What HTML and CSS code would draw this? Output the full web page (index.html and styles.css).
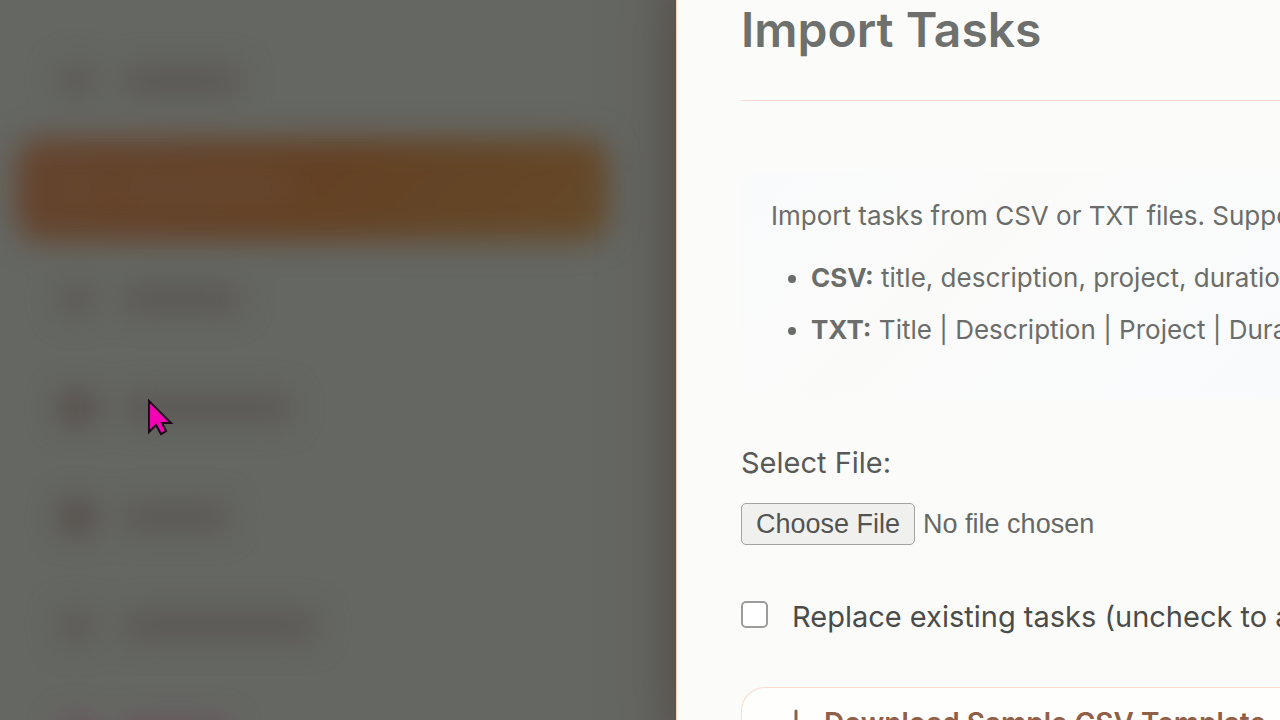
FILE: index.html
```html
<!DOCTYPE html>
<html lang="en">
<head>
  <meta charset="UTF-8" />
  <meta name="viewport" content="width=device-width, initial-scale=1.0" />
  <title>Import Tasks</title>
  <link rel="stylesheet" href="styles.css">
</head>
<body>
  <div class="app">
    <!-- Sidebar stays out of focus while the modal is open -->
    <aside class="sidebar" aria-hidden="true">
      <div class="nav">
        <div class="nav-item"><span class="nav-icon light"></span><span class="nav-text"></span></div>
        <div class="nav-item active"><span class="nav-icon"></span><span class="nav-text long"></span></div>
        <div class="nav-item"><span class="nav-icon light"></span><span class="nav-text"></span></div>
        <div class="nav-item"><span class="nav-icon"></span><span class="nav-text long"></span></div>
        <div class="nav-item"><span class="nav-icon"></span><span class="nav-text short"></span></div>
        <div class="nav-item"><span class="nav-icon light"></span><span class="nav-text longer"></span></div>
        <div class="nav-item danger"><span class="nav-icon"></span><span class="nav-text short"></span></div>
      </div>
    </aside>

    <main class="modal" role="dialog" aria-labelledby="modal-title">
      <div class="modal-header">
        <h1 id="modal-title">Import Tasks</h1>
      </div>

      <div class="import-info">
        <p>Import tasks from CSV or TXT files. Supported formats:</p>
        <ul>
          <li><strong>CSV:</strong> title, description, project, duration</li>
          <li><strong>TXT:</strong> Title | Description | Project | Duration</li>
        </ul>
      </div>

      <form class="import-form">
        <label class="file-label" for="import-file">Select File:</label>
        <input type="file" id="import-file" />

        <div class="check-row">
          <input type="checkbox" id="replace-tasks" />
          <label for="replace-tasks">Replace existing tasks (uncheck to append)</label>
        </div>

        <button type="button" class="download-btn">
          <svg width="28" height="28" viewBox="0 0 28 28" fill="none" stroke="currentColor" stroke-width="3" stroke-linecap="round" stroke-linejoin="round">
            <path d="M14 2v22M5 15l9 9 9-9" />
          </svg>
          Download Sample CSV Template
        </button>
      </form>
    </main>
  </div>

  <svg class="cursor" width="28" height="38" viewBox="0 0 28 38" aria-hidden="true">
    <path d="M2 2v31l7-7 5 9 5-3-4-8h9z" fill="#f400b5" stroke="#1d0718" stroke-width="2" />
  </svg>
</body>
</html>
```

FILE: styles.css
```css
* {
  box-sizing: border-box;
}
body {
  margin: 0;
  font-family: Inter, "Liberation Sans", sans-serif;
  background: #656763;
  overflow: hidden;
}
.app {
  display: flex;
  height: 100vh;
  overflow: hidden;
}

/* Sidebar */
.sidebar {
  flex: 0 0 676px;
}
.nav {
  display: flex;
  flex-direction: column;
  gap: 6px;
  padding: 29px 68px 0 16px;
  filter: blur(15px);
}
.nav-item {
  display: flex;
  align-items: center;
  flex-shrink: 0;
  gap: 30px;
  height: 103px;
  padding-left: 44px;
  border-radius: 24px;
}
.nav-item.active {
  background: linear-gradient(135deg, #65442f, #644124 50%, #654a29);
}
.nav-icon {
  width: 34px;
  height: 34px;
  border-radius: 8px;
  background: #554c48;
}
.nav-icon.light {
  background: #5c5954;
}
.nav-text {
  width: 116px;
  height: 28px;
  background: #5b5752;
}
.nav-text.short {
  width: 104px;
}
.nav-text.long {
  width: 166px;
}
.nav-text.longer {
  width: 192px;
}
.active .nav-icon,
.active .nav-text {
  background: #66472f;
}
.danger .nav-icon,
.danger .nav-text {
  background: #67525a;
}

/* Modal */
.modal {
  position: relative;
  flex: 1;
  min-width: 0;
  padding-left: 64px;
  border-left: 1px solid #f5cdb8;
  background: #fbfcfa;
  box-shadow: 20px 0 56px 20px rgba(62, 42, 32, 0.6);
  color: #6b6d6a;
  white-space: nowrap;
  overflow: hidden;
}
.modal-header {
  height: 101px;
  border-bottom: 1px solid #fbdcd0;
}
h1 {
  margin: 0;
  font-size: 48px;
  font-weight: 600;
  line-height: 60px;
  color: #6e706d;
}
.import-info {
  margin-top: 70px;
  padding: 24px 30px;
  border-radius: 16px 0 0 16px;
  background: linear-gradient(135deg, #f9fafb, #fafbf9 40%, #f9fafc);
  font-size: 26px;
  line-height: 42px;
}
.import-info p {
  margin: 0;
}
.import-info ul {
  display: flex;
  flex-direction: column;
  gap: 10px;
  margin: 20px 0 24px;
  padding-left: 40px;
}
.import-info strong {
  font-weight: 700;
}

.import-form {
  margin-top: 47px;
  font-size: 29px;
  font-weight: 400;
  line-height: 34px;
}
.file-label {
  display: block;
  margin-bottom: 23px;
  color: #595a58;
}
input[type="file"] {
  display: block;
  height: 42px;
  font-family: "Liberation Sans", Arial, sans-serif;
  font-size: 27px;
  font-weight: 400;
  color: #666865;
}
input[type="file"]::file-selector-button {
  height: 42px;
  margin: 0 8px 0 0;
  padding: 0 14px;
  border: 1px solid #a3a4a2;
  border-radius: 5px;
  background: #f0f1ef;
  font: inherit;
  color: #535452;
}
.check-row {
  display: flex;
  align-items: center;
  gap: 24px;
  margin-top: 55px;
  color: #4b4c4a;
}
.check-row input {
  appearance: none;
  flex-shrink: 0;
  width: 27px;
  height: 27px;
  margin: 0 0 6px;
  border: 2px solid #9c9d9b;
  border-radius: 5px;
  background: #fff;
}
.download-btn {
  display: flex;
  align-items: center;
  gap: 14px;
  width: 100%;
  height: 72px;
  margin-top: 53px;
  padding: 0 40px;
  border: 1px solid #f9ddd0;
  border-right: none;
  border-radius: 24px 0 0 24px;
  background: #fefefd;
  font-family: inherit;
  font-size: 28px;
  font-weight: 600;
  color: #8f5f47;
  white-space: nowrap;
}
.download-btn svg {
  flex-shrink: 0;
}

/* Pointer floats over the page */
.cursor {
  position: absolute;
  left: 147px;
  top: 399px;
}
```
